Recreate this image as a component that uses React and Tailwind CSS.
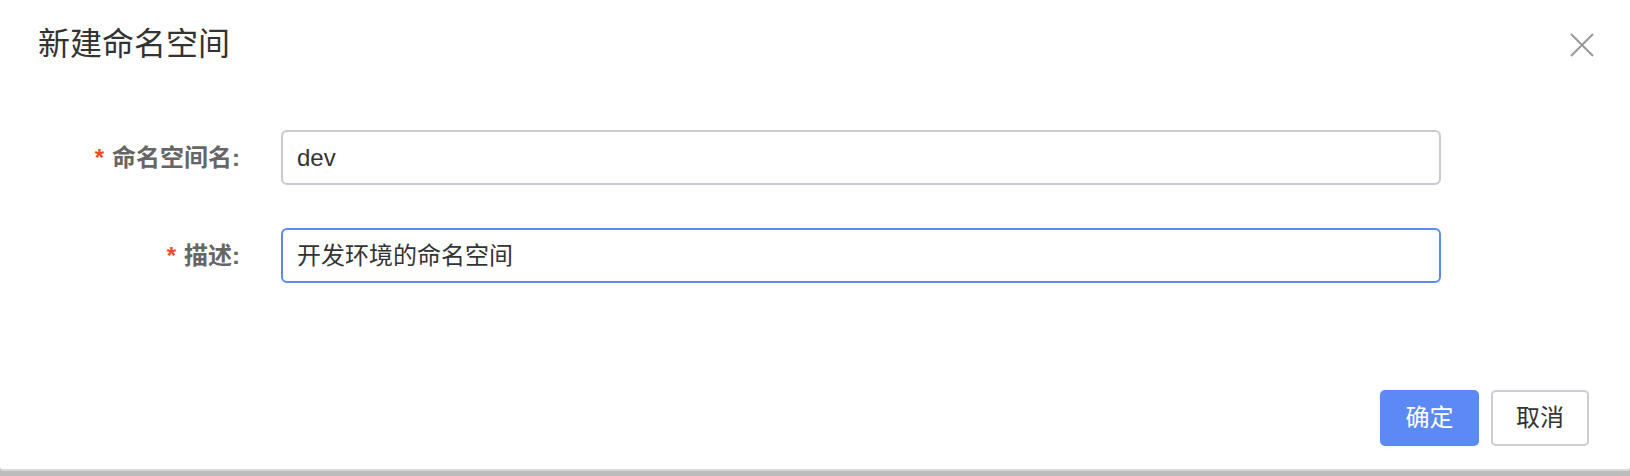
import React from "react";

export default function App() {
  return (
    <div className="w-[1630px] h-[476px] bg-[#bcbcbc] overflow-hidden font-['Liberation_Sans','Noto_Sans_CJK_SC',sans-serif]">
      <div className="h-[469px] bg-white rounded-b-[3px] shadow-[0_2px_0_#d9d9d9] flex flex-col">
        <div className="h-[88px] flex items-center justify-between pl-[38px] pr-[36px]">
          <div className="text-[32px] leading-none text-[#333]">新建命名空间</div>
          <svg width="24" height="24" viewBox="0 0 24 24" className="mt-[2px]">
            <path d="M1 1 L23 23 M23 1 L1 23" stroke="#999" strokeWidth="2" fill="none" />
          </svg>
        </div>
        <div className="flex flex-col gap-[43px] pt-[42px]">
          <div className="flex items-center">
            <div className="w-[240px] text-right text-[24px] font-bold text-[#666] leading-none">
              <span className="text-[#f04a25] mr-[8px]">*</span>命名空间名:
            </div>
            <div className="ml-[41px] w-[1160px] h-[55px] border-2 border-[#c9c9d1] rounded-[6px] flex items-center px-[14px] text-[24px] text-[#333]">
              dev
            </div>
          </div>
          <div className="flex items-center">
            <div className="w-[240px] text-right text-[24px] font-bold text-[#666] leading-none">
              <span className="text-[#f04a25] mr-[8px]">*</span>描述:
            </div>
            <div className="ml-[41px] w-[1160px] h-[55px] border-2 border-[#5b8af5] rounded-[6px] flex items-center px-[14px] text-[24px] text-[#333]">
              开发环境的命名空间
            </div>
          </div>
        </div>
        <div className="mt-auto pb-[23px] pr-[41px] flex justify-end gap-[12px]">
          <button className="w-[99px] h-[56px] rounded-[5px] bg-[#5b8af7] text-white text-[24px]">确定</button>
          <button className="w-[98px] h-[56px] rounded-[5px] border-2 border-[#cdcdd3] bg-white text-[#333] text-[24px]">取消</button>
        </div>
      </div>
    </div>
  );
}
